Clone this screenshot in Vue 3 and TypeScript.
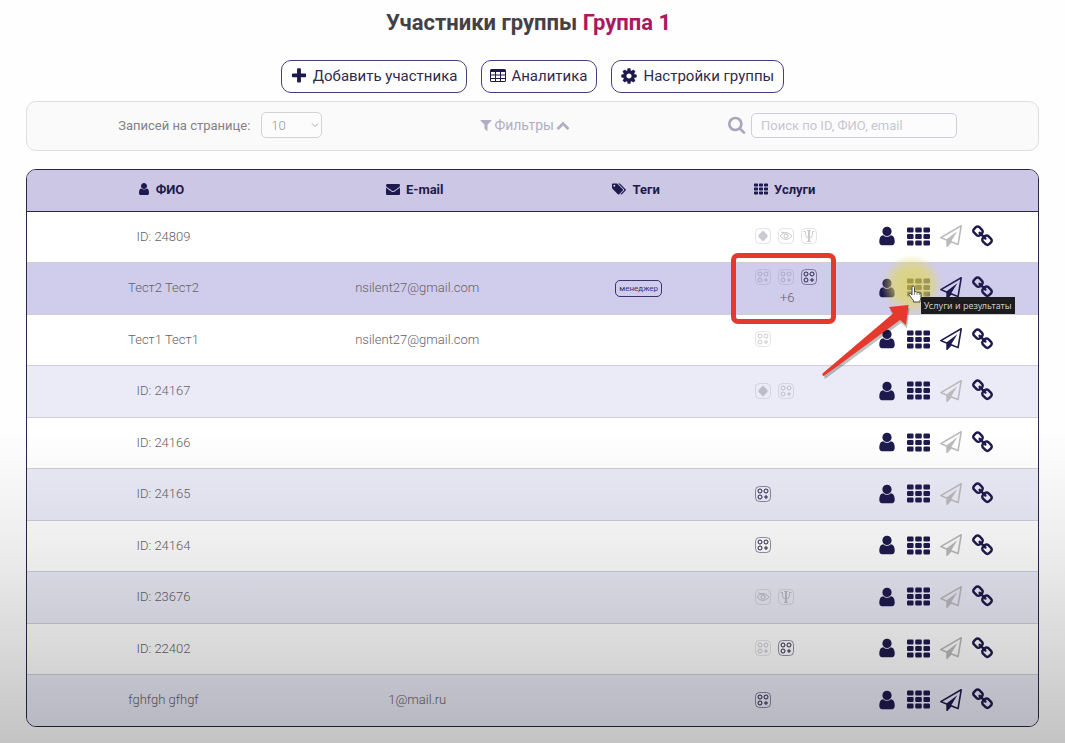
<script setup lang="ts">
import { ref } from 'vue'

type Service = 'gem' | 'eye' | 'psi' | 'set'
interface ServiceMark { kind: Service; active?: boolean }
interface Member {
  name: string
  email?: string
  tag?: string
  services: ServiceMark[]
  more?: string
  invite?: boolean
  hovered?: boolean
}

const pageSize = ref('10')
const query = ref('')

const members: Member[] = [
  { name: 'ID: 24809', services: [{ kind: 'gem' }, { kind: 'eye' }, { kind: 'psi' }] },
  {
    name: 'Тест2 Тест2', email: 'nsilent27@gmail.com', tag: 'менеджер',
    services: [{ kind: 'set' }, { kind: 'set' }, { kind: 'set', active: true }],
    more: '+6', invite: true, hovered: true,
  },
  { name: 'Тест1 Тест1', email: 'nsilent27@gmail.com', services: [{ kind: 'set' }], invite: true },
  { name: 'ID: 24167', services: [{ kind: 'gem' }, { kind: 'set' }] },
  { name: 'ID: 24166', services: [] },
  { name: 'ID: 24165', services: [{ kind: 'set', active: true }] },
  { name: 'ID: 24164', services: [{ kind: 'set', active: true }] },
  { name: 'ID: 23676', services: [{ kind: 'eye' }, { kind: 'psi' }] },
  { name: 'ID: 22402', services: [{ kind: 'set' }, { kind: 'set', active: true }] },
  { name: 'fghfgh gfhgf', email: '1@mail.ru', services: [{ kind: 'set', active: true }], invite: true },
]

const icons = {
  user: 'M1536 1399q0 109-62.5 187t-150.5 78h-854q-88 0-150.5-78t-62.5-187q0-85 8.5-160.5t31.5-152 58.5-131 94-89 134.5-34.5q131 128 313 128t313-128q76 0 134.5 34.5t94 89 58.5 131 31.5 152 8.5 160.5zm-256-887q0 159-112.5 271.5t-271.5 112.5-271.5-112.5-112.5-271.5 112.5-271.5 271.5-112.5 271.5 112.5 112.5 271.5z',
  plane: 'M1764 11q33 24 27 64l-256 1536q-5 29-32 45-14 8-31 8-11 0-24-5l-527-215-298 327q-18 21-47 21-14 0-23-4-19-7-30-23.5t-11-36.5v-452l-472-193q-37-14-40-55-3-39 32-59l1664-960q35-21 68 2zm-342 1499l221-1323-1434 827 336 137 863-639-478 797z',
  link: 'M1520 1216q0-40-28-68l-208-208q-28-28-68-28-42 0-72 32 3 3 19 18.5t21.5 21.5 15 19 13 25.5 3.5 27.5q0 40-28 68t-68 28q-15 0-27.5-3.5t-25.5-13-19-15-21.5-21.5-18.5-19q-33 31-33 73 0 40 28 68l206 207q27 27 68 27 40 0 68-26l147-146q28-28 28-67zm-703-705q0-40-28-68l-206-207q-28-28-68-28-39 0-68 27l-147 146q-28 28-28 67 0 40 28 68l208 208q27 27 68 27 42 0 72-31-3-3-19-18.5t-21.5-21.5-15-19-13-25.5-3.5-27.5q0-40 28-68t68-28q15 0 27.5 3.5t25.5 13 19 15 21.5 21.5 18.5 19q33-31 33-73zm895 705q0 120-85 203l-147 146q-83 83-203 83-121 0-204-85l-206-207q-83-83-83-203 0-123 88-209l-88-88q-86 88-208 88-120 0-204-84l-208-208q-84-84-84-204t85-203l147-146q83-83 203-83 121 0 204 85l206 207q83 83 83 203 0 123-88 209l88 88q86-88 208-88 120 0 204 84l208 208q84 84 84 204z',
  plus: 'M1600 736v192q0 40-28 68t-68 28h-416v416q0 40-28 68t-68 28h-192q-40 0-68-28t-28-68v-416h-416q-40 0-68-28t-28-68v-192q0-40 28-68t68-28h416v-416q0-40 28-68t68-28h192q40 0 68 28t28 68v416h416q40 0 68 28t28 68z',
  cog: 'M1152 896q0-106-75-181t-181-75-181 75-75 181 75 181 181 75 181-75 75-181zm512-109v222q0 12-8 23t-20 13l-185 28q-19 54-39 91 35 50 107 138 10 12 10 25t-9 23q-27 37-99 108t-94 71q-12 0-26-9l-138-108q-44 23-91 38-16 136-29 186-7 28-36 28h-222q-14 0-24.5-8.5t-11.5-21.5l-28-184q-49-16-90-37l-141 107q-10 9-25 9-14 0-25-11-126-114-165-168-7-10-7-23 0-12 8-23 15-21 51-66.5t54-70.5q-27-50-41-99l-183-27q-13-2-21-12.5t-8-23.5v-222q0-12 8-23t19-13l186-28q14-46 39-92-40-57-107-138-10-12-10-24 0-10 9-23 26-36 98.5-107.5t94.5-71.5q13 0 26 10l138 107q44-23 91-38 16-136 29-186 7-28 36-28h222q14 0 24.5 8.5t11.5 21.5l28 184q49 16 90 37l142-107q9-9 24-9 13 0 25 10 129 119 165 170 7 8 7 22 0 12-8 23-15 21-51 66.5t-54 70.5q26 50 41 98l183 28q13 2 21 12.5t8 23.5z',
  filter: 'M1595 295q17 41-14 70l-493 493v742q0 42-39 59-13 5-25 5-27 0-45-19l-256-256q-19-19-19-45v-486l-493-493q-31-29-14-70 17-39 59-39h1280q42 0 59 39z',
  up: 'M1683 1331l-166 165q-19 19-45 19t-45-19l-531-531-531 531q-19 19-45 19t-45-19l-166-165q-19-19-19-45.5t19-45.5l742-741q19-19 45-19t45 19l742 741q19 19 19 45.5t-19 45.5z',
  search: 'M1216 832q0-185-131.5-316.5t-316.5-131.5-316.5 131.5-131.5 316.5 131.5 316.5 316.5 131.5 316.5-131.5 131.5-316.5zm512 832q0 52-38 90t-90 38q-54 0-90-38l-343-342q-179 124-399 124-143 0-273.5-55.5t-225-150-150-225-55.5-273.5 55.5-273.5 150-225 225-150 273.5-55.5 273.5 55.5 225 150 150 225 55.5 273.5q0 220-124 399l343 343q37 37 37 90z',
  mail: 'M1792 710v794q0 66-47 113t-113 47h-1472q-66 0-113-47t-47-113v-794q44 49 101 87 362 246 497 345 57 42 92.5 65.5t94.5 48 110 24.5h2q51 0 110-24.5t94.5-48 92.5-65.5q170-123 498-345 57-39 100-87zm0-294q0 79-49 151t-122 123q-376 261-468 325-10 7-42.5 31t-54 38-52 36.5-57.5 27-50 9h-2q-23 0-50-9t-57.5-27-52-36.5-54-38-42.5-31q-91-64-262-182.5t-205-142.5q-62-42-117-115.5t-55-136.5q0-78 41.5-130t118.5-52h1472q65 0 112.5 47t47.5 113z',
  tags: 'M448 448q0-53-37.5-90.5t-90.5-37.5-90.5 37.5-37.5 90.5 37.5 90.5 90.5 37.5 90.5-37.5 37.5-90.5zm1067 576q0 53-37 90l-491 492q-39 37-91 37-53 0-90-37l-715-716q-38-37-64.5-101t-26.5-117v-416q0-52 38-90t90-38h416q53 0 117 26.5t102 64.5l715 714q37 39 37 91zm384 0q0 53-37 90l-491 492q-39 37-91 37-36 0-59-14t-53-45l470-470q37-37 37-90 0-52-37-91l-715-714q-38-38-102-64.5t-117-26.5h224q53 0 117 26.5t102 64.5l715 714q37 39 37 91z',
  grid: [192, 704, 1216].map(y => [0, 640, 1280].map(x =>
    `M${x + 96} ${y}h320q96 0 96 96v192q0 96-96 96h-320q-96 0-96-96v-192q0-96 96-96z`).join('')).join(''),
}
</script>

<template>
  <main class="page">
    <h1 class="title">Участники группы <span class="accent">Группа 1</span></h1>

    <div class="toolbar">
      <button class="action" type="button">
        <svg class="ico18" viewBox="0 0 1792 1792"><path :d="icons.plus" /></svg>
        <span>Добавить участника</span>
      </button>
      <button class="action" type="button">
        <svg class="ico16" viewBox="0 0 16 16">
          <path fill-rule="evenodd" d="M1.5 1h13A1.5 1.5 0 0 1 16 2.500v10a1.500 1.500 0 0 1-1.500 1.500h-13A1.500 1.500 0 0 1 0 12.500v-10A1.500 1.500 0 0 1 1.500 1zM1 4h4v2.500H1zM6 4h4v2.500H6zM11 4h4v2.500h-4zM1 7.500h4V10H1zM6 7.500h4V10H6zM11 7.500h4V10h-4zM1 11h4v2H1zM6 11h4v2H6zM11 11h4v2h-4z" />
        </svg>
        <span>Аналитика</span>
      </button>
      <button class="action" type="button">
        <svg class="ico18" viewBox="0 0 1792 1792"><path :d="icons.cog" /></svg>
        <span>Настройки группы</span>
      </button>
    </div>

    <section class="filters">
      <div class="size">
        <label for="page-size">Записей на странице:</label>
        <div class="select-box">
          <select id="page-size" v-model="pageSize">
            <option>10</option>
            <option>25</option>
            <option>50</option>
          </select>
          <svg class="caret" viewBox="0 0 8 8"><path d="M1 2.500l3 3 3-3" /></svg>
        </div>
      </div>
      <button class="toggle" type="button">
        <svg class="ico12" viewBox="128 128 1536 1536"><path :d="icons.filter" /></svg>
        <span>Фильтры</span>
        <svg class="ico14" viewBox="0 0 1792 1792"><path :d="icons.up" /></svg>
      </button>
      <div class="search">
        <label for="search" aria-label="Поиск">
          <svg class="ico18" viewBox="64 64 1728 1728"><path :d="icons.search" /></svg>
        </label>
        <input id="search" v-model="query" type="text" placeholder="Поиск по ID, ФИО, email">
      </div>
    </section>

    <div class="table-box">
      <table>
        <colgroup>
          <col class="c-name"><col class="c-mail"><col class="c-tags"><col class="c-serv"><col class="c-act">
        </colgroup>
        <thead>
          <tr>
            <th><span class="head"><svg class="ico12" viewBox="192 128 1408 1536"><path :d="icons.user" /></svg>ФИО</span></th>
            <th><span class="head"><svg class="ico14" viewBox="0 0 1792 1792"><path :d="icons.mail" /></svg>E-mail</span></th>
            <th><span class="head"><svg class="ico14" viewBox="0 0 1920 1792"><path :d="icons.tags" /></svg>Теги</span></th>
            <th><span class="head"><svg class="ico14" viewBox="0 0 1792 1792"><path :d="icons.grid" /></svg>Услуги</span></th>
            <th></th>
          </tr>
        </thead>
        <tbody>
          <tr v-for="m in members" :key="m.name" :class="{ hovered: m.hovered }">
            <td>{{ m.name }}</td>
            <td>{{ m.email }}</td>
            <td><span v-if="m.tag" class="tag">{{ m.tag }}</span></td>
            <td>
              <div class="services">
                <div class="marks">
                  <svg v-for="(s, i) in m.services" :key="i" class="mark" :class="{ active: s.active }" viewBox="0 0 16 16">
                    <rect class="frame" x="0.500" y="0.500" width="15" height="15" rx="4" />
                    <g v-if="s.kind === 'set'">
                      <circle cx="5" cy="5" r="2" /><circle cx="11" cy="5" r="2" /><circle cx="5" cy="11" r="2" />
                      <path d="M11 9v4M9 11h4" />
                    </g>
                    <g v-else-if="s.kind === 'gem'">
                      <path class="solid" d="M8 2.500L12.500 7v2L8 13.500 3.500 9V7z" />
                    </g>
                    <g v-else-if="s.kind === 'eye'">
                      <path d="M2 8q6-7 12 0q-6 7-12 0zM3 4q5 0 8 4" /><circle cx="8" cy="8" r="2" />
                    </g>
                    <g v-else>
                      <path class="stem" d="M8 2.500v11" />
                      <path d="M6 2.500h4M6 13.500h4M2.500 3.500h2v3q0 3.500 3.500 3.500t3.500-3.500v-3h2" />
                    </g>
                  </svg>
                </div>
                <span v-if="m.more" class="more">{{ m.more }}</span>
                <span v-if="m.hovered" class="callout"></span>
              </div>
            </td>
            <td>
              <div class="actions">
                <button type="button" aria-label="Профиль">
                  <svg class="ico20" viewBox="64 64 1664 1664"><path :d="icons.user" /></svg>
                </button>
                <button type="button" aria-label="Услуги и результаты">
                  <svg class="ico23" viewBox="0 0 1792 1792"><path :d="icons.grid" /></svg>
                </button>
                <button type="button" :disabled="!m.invite" aria-label="Отправить">
                  <svg class="ico22" viewBox="0 0 1792 1792"><path :d="icons.plane" /></svg>
                </button>
                <button type="button" aria-label="Ссылка">
                  <svg class="ico23" viewBox="0 0 1792 1792"><path :d="icons.link" /></svg>
                </button>
                <div v-if="m.hovered" class="pointer-layer">
                  <span class="glow"></span>
                  <span class="tip">Услуги и результаты</span>
                  <svg class="arrow" viewBox="0 0 92 80">
                    <path class="arrow-shadow" d="M4 75.500L74 15.500 70 9 89.500 7 87 27 81 22 5 78z" />
                    <path class="arrow-body" d="M2.500 72.500L73 12.500 69 6 88.500 4 86 24 80 19 4 75Q2 75 2.500 72.500z" />
                  </svg>
                  <svg class="hand" viewBox="0 0 14 18">
                    <path d="M4 10V2.500Q4 1 5.250 1T6.500 2.500V7Q8.500 5.800 9 7.500 10.800 6.600 11.300 8.200 13 7.600 13 9.500V12q0 2-1 3.500V17H5.500V15.500Q3.500 13.500 2.500 11.500L1 9.500Q1 7.800 2.500 8.500z" />
                    <path class="knuckles" d="M6.500 7v3M9 7.500V10M11.300 8.200V10" />
                  </svg>
                </div>
              </div>
            </td>
          </tr>
        </tbody>
      </table>
    </div>
    <div class="shade"></div>
  </main>
</template>

<style>
body { margin: 0; background: #fefefe; }
</style>

<style scoped>
.page {
  position: relative;
  box-sizing: border-box;
  min-height: 100vh;
  padding: 8px 26px 17px;
  font-family: Roboto, "Noto Sans", sans-serif;
  color: #666268;
}
svg { display: block; flex: none; fill: currentColor; }
button { font: inherit; cursor: pointer; }
.ico12 { width: 12px; height: 12px; }
.ico14 { width: 14px; height: 14px; }
.ico16 { width: 16px; height: 16px; }
.ico18 { width: 18px; height: 18px; }
.ico20 { width: 20px; height: 20px; }
.ico22 { width: 22px; height: 22px; }
.ico23 { width: 23px; height: 23px; }

.title {
  margin: 0;
  padding-right: 8px;
  font-size: 22px;
  line-height: 30px;
  font-weight: 700;
  text-align: center;
  color: #444046;
}
.accent { color: #a8195f; }

.toolbar {
  display: flex;
  justify-content: center;
  gap: 14px;
  margin-top: 22px;
}
.action {
  display: flex;
  align-items: center;
  gap: 5px;
  height: 33px;
  padding: 0 9px 2px 8px;
  border: 1px solid #45407c;
  border-radius: 10px;
  background: #fff;
  color: #1f1a4d;
  font-size: 15px;
}
.action span { color: #2f2b4c; }

.filters {
  display: flex;
  align-items: center;
  justify-content: space-between;
  box-sizing: border-box;
  height: 50px;
  margin-top: 8px;
  padding: 0 8% 2px 9%;
  border: 1px solid #dedee0;
  border-radius: 10px;
  background: #fafafa;
  font-size: 14px;
}
.size { display: flex; align-items: center; gap: 11px; font-size: 13px; color: #858187; }
.select-box { position: relative; }
select {
  appearance: none;
  width: 61px;
  height: 26px;
  padding: 0 9px;
  border: 1px solid #d3d3d6;
  border-radius: 5px;
  background: #fcfcfc;
  color: #96939b;
  font: 300 13px Roboto, sans-serif;
}
.caret {
  position: absolute;
  right: 3px;
  top: 9px;
  width: 8px;
  height: 8px;
  fill: none;
  stroke: #aaa8ae;
}
.toggle {
  display: flex;
  align-items: center;
  gap: 2px;
  padding: 0;
  border: 0;
  background: none;
  color: #b1aec4;
}
.search { display: flex; align-items: center; gap: 5px; color: #aaa7ba; }
.search input {
  box-sizing: border-box;
  width: 206px;
  height: 25px;
  padding: 0 9px;
  border: 1px solid #cfcedb;
  border-radius: 5px;
  background: #fcfcfd;
  font: 13px Roboto, sans-serif;
}
.search input::placeholder { color: #c8c6cf; opacity: 1; }

.table-box {
  overflow: hidden;
  margin-top: 18px;
  border: 1px solid #29254c;
  border-radius: 10px;
}
table { width: 100%; table-layout: fixed; border-collapse: separate; border-spacing: 0; }
.c-name { width: 27%; }
.c-mail { width: 23.2%; }
.c-tags { width: 20.6%; }
.c-serv { width: 8.8%; }
.c-act { width: 20.4%; }
th, td {
  box-sizing: border-box;
  padding: 0 0 2px;
  text-align: center;
  vertical-align: middle;
}
th {
  height: 42px;
  padding: 0 5px 3px 0;
  border-bottom: 1px solid #29254c;
  background: #cbc7e4;
  color: #1f1a4d;
  font-size: 13px;
  font-weight: 700;
}
.head { display: flex; align-items: center; justify-content: center; gap: 6px; }
td {
  height: 51px;
  border-bottom: 1px solid #cfcdda;
  background: #fff;
  font-size: 13px;
  font-weight: 300;
}
tr:nth-child(even) td { height: 52px; background: #eaebf7; }
tr.hovered:nth-child(even) td { background: #d0ccec; }
tr:last-child td { height: 51px; border-bottom: 0; }

.tag {
  display: inline-block;
  padding: 0 3px;
  border: 1px solid #39346a;
  border-radius: 5px;
  color: #39346a;
  font-size: 8px;
  line-height: 15px;
  font-weight: 400;
}
.services { position: relative; width: 64px; margin: 0 auto; }
.marks { display: flex; gap: 7px; }
.mark {
  width: 16px;
  height: 16px;
  fill: none;
  stroke: #6c6a78;
  opacity: 0.35;
}
.mark .frame { opacity: 0.5; }
.mark .solid { fill: #6c6a78; stroke: none; }
.mark .stem { stroke-width: 2; }
.mark.active { stroke: #29254c; opacity: 1; }
.more { display: block; margin-top: 5px; line-height: 16px; }
.callout {
  position: absolute;
  inset: -16px -17px -18px -24px;
  border: 5px solid #e5392d;
  border-radius: 7px;
}

.actions {
  position: relative;
  display: flex;
  gap: 8px;
  width: 120px;
  margin: 0 auto;
}
.actions button {
  display: flex;
  align-items: center;
  justify-content: center;
  width: 24px;
  height: 24px;
  padding: 0;
  border: 0;
  background: none;
  color: #1f1a4d;
}
.actions button:disabled { color: #bcb9bc; }

.pointer-layer { position: absolute; left: 32px; top: 0; z-index: 2; pointer-events: none; }
.glow {
  position: absolute;
  left: -26px;
  top: -22px;
  width: 62px;
  height: 62px;
  border-radius: 50%;
  background: radial-gradient(circle, rgba(222, 213, 72, 0.7) 0, rgba(224, 215, 96, 0.65) 40%, rgba(225, 217, 120, 0) 70%);
}
.tip {
  position: absolute;
  left: 14px;
  top: 21px;
  padding: 0 3px;
  background: #1c1b1e;
  color: #c9c9c9;
  font: 9px/17px "Noto Sans", sans-serif;
  white-space: nowrap;
}
.arrow { position: absolute; left: -87px; top: 25px; width: 92px; height: 80px; }
.arrow-body { fill: #e5392d; }
.arrow-shadow { fill: #000; opacity: 0.25; }
.hand {
  position: absolute;
  left: 1px;
  top: 9px;
  width: 14px;
  height: 18px;
  fill: #fff;
  stroke: #444;
}
.hand .knuckles { fill: none; stroke: #888; }

.shade {
  position: absolute;
  inset: 0;
  z-index: 3;
  pointer-events: none;
  background: linear-gradient(transparent 58%, rgba(0, 0, 0, 0.07) 74%, rgba(0, 0, 0, 0.15) 87%, rgba(0, 0, 0, 0.23));
}
</style>
